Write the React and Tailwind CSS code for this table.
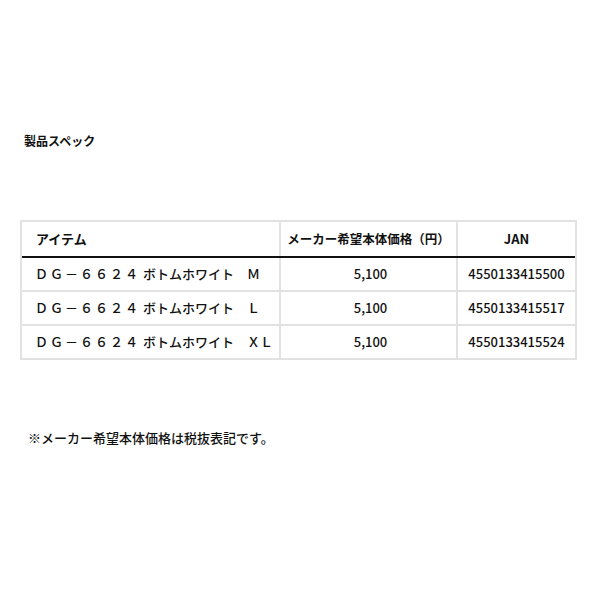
import React from "react";

const rows = [
  { code: "ＤＧ－６６２４", name: "ボトムホワイト　Ｍ", price: "5,100", jan: "4550133415500" },
  { code: "ＤＧ－６６２４", name: "ボトムホワイト　Ｌ", price: "5,100", jan: "4550133415517" },
  { code: "ＤＧ－６６２４", name: "ボトムホワイト　ＸＬ", price: "5,100", jan: "4550133415524" },
];

export default function App() {
  return (
    <div
      className="w-[600px] h-[600px] bg-white text-[#111] pt-[132px] pl-[20px]"
      style={{ fontFamily: '"Noto Sans CJK JP", "Noto Sans", sans-serif' }}
    >
      <div className="pl-[4px] text-[12px] leading-[18px] font-bold">製品スペック</div>
      <div className="mt-[70px] w-[557px] border-2 border-[#e2e2e2]">
        <div className="flex h-[36px] border-b-2 border-[#111] text-[13px] font-bold">
          <div className="w-[257px] flex items-center pl-[14px]">アイテム</div>
          <div className="w-[177px] flex items-center justify-center border-l-2 border-[#e2e2e2] text-[12.5px]">
            メーカー希望本体価格（円）
          </div>
          <div className="flex-1 flex items-center justify-center border-l-2 border-[#e2e2e2]">JAN</div>
        </div>
        {rows.map((r, i) => (
          <div
            key={i}
            className={`flex h-[32px] text-[13px] font-medium ${i < rows.length - 1 ? "box-content border-b-2 border-[#e2e2e2]" : ""}`}
          >
            <div className="w-[257px] flex items-center pl-[13px] whitespace-nowrap">
              <span className="text-[13px] tracking-[2px]">{r.code}</span>
              <span className="ml-[3px] text-[13px]">{r.name}</span>
            </div>
            <div className="w-[177px] flex items-center justify-center border-l-2 border-[#e2e2e2] pl-[4px]">{r.price}</div>
            <div className="flex-1 flex items-center justify-center border-l-2 border-[#e2e2e2]">{r.jan}</div>
          </div>
        ))}
      </div>
      <div className="mt-[68px] pl-[8px] text-[13px] leading-[20px] font-medium">※メーカー希望本体価格は税抜表記です。</div>
    </div>
  );
}
